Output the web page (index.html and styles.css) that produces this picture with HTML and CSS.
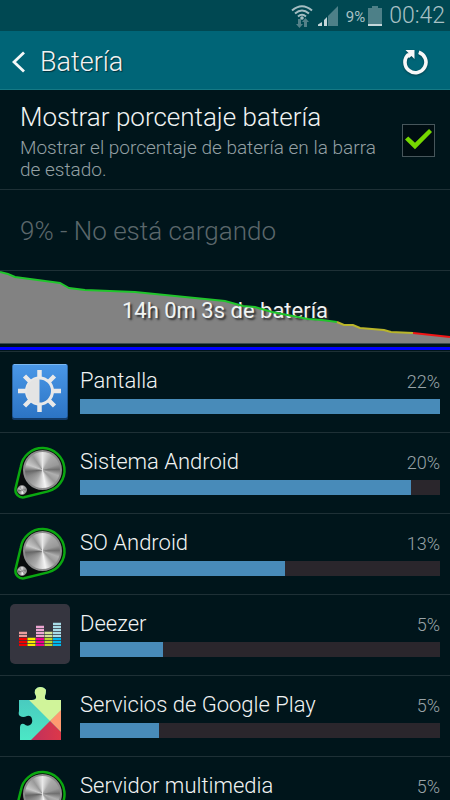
FILE: index.html
```html
<!DOCTYPE html>
<html lang="es">
<head>
<meta charset="utf-8">
<meta name="viewport" content="width=device-width, initial-scale=1">
<title>Batería</title>
<link rel="stylesheet" href="styles.css">
</head>
<body>
<div class="screen">
  <div class="status">
    <svg class="status-wifi" width="22" height="24" viewBox="0 0 22 24" aria-hidden="true">
      <g fill="none" stroke="#a5bec3" stroke-width="2">
        <path d="M1 6.500Q11-2 21 6.500"/><path d="M4 9.500Q11 3.500 18 9.500"/><path d="M7 12.500Q11 9 15 12.500"/>
      </g>
      <circle cx="11" cy="14" r="1.800" fill="#a5bec3"/>
      <path d="M7 15h3v5h2l-3.500 4L5 20h2zM13 23h3v-5h2l-3.500-4L11 18h2z" fill="#548088"/>
    </svg>
    <svg class="status-signal" width="20" height="20" viewBox="0 0 20 20" aria-hidden="true">
      <path d="M10 10L20 0V20H10z" fill="#4d8088"/>
      <path d="M0 20V18.500L4 16V20zM6 20V14L9 11V20z" fill="#c5d7da"/>
    </svg>
    <span class="status-percent">9%</span>
    <svg class="status-battery" width="14" height="20" viewBox="0 0 14 20" aria-hidden="true">
      <path d="M0 2H4V0H10V2H14V20H0z" fill="#4d8088"/><path d="M0 18H14V20H0z" fill="#c5d7da"/>
    </svg>
    <span class="clock">00:42</span>
  </div>

  <header class="bar">
    <button class="back" aria-label="Atrás">
      <svg width="14" height="22" viewBox="0 0 14 22"><path d="M12 1.500L2 11L12 20.500" fill="none" stroke="#f4f8f8" stroke-width="2.800"/></svg>
    </button>
    <h1 class="bar-title">Batería</h1>
    <button class="refresh" aria-label="Actualizar">
      <svg width="26" height="26" viewBox="0 0 26 26"><path d="M15.800 3.200A10.500 10.500 0 1 1 5.500 5.300" fill="none" stroke="#f8f8f8" stroke-width="3.600"/><path d="M2.500 1H11.500V10L8.500 7L6 9L3.500 6L5.500 4z" fill="#f8f8f8"/></svg>
    </button>
  </header>

  <main>
    <label class="setting">
      <span class="setting-text">
        <span class="setting-title">Mostrar porcentaje batería</span>
        <span class="setting-note">Mostrar el porcentaje de batería en la barra de estado.</span>
      </span>
      <input class="check" type="checkbox" checked>
    </label>
    <p class="state">9% - No está cargando</p>

    <section class="chart">
      <svg class="chart-layer" viewBox="0 0 450 72" preserveAspectRatio="none" aria-hidden="true">
        <path fill="#828282" d="M0 1L8 3L15 6L30 8L60 12L69 17L85 19L135 21L175 25L225 30L243 35L255 36L272 41L308 48L322 49L337 51L344 54L353 54L360 57L384 59L391 61L413 62L450 66V72H0z"/>
      </svg>
      <p class="chart-text">14h 0m 3s de batería</p>
      <svg class="chart-layer" viewBox="0 0 450 72" preserveAspectRatio="none" aria-hidden="true">
        <g fill="none" stroke-width="2">
          <path stroke="#20c52c" d="M0 1L8 3L15 6L30 8L60 12L69 17L85 19L135 21L175 25L225 30L243 35L255 36L272 41L308 48L322 49L337 51"/>
          <path stroke="#b9b52a" d="M337 51L344 54L353 54L360 57L384 59L391 61L413 62"/>
          <path stroke="#f01414" d="M413 62L450 66"/>
        </g>
      </svg>
    </section>
    <div class="timeline"></div>

    <ul class="apps">
      <li class="app">
        <span class="app-icon">
          <svg width="60" height="60" viewBox="0 0 60 60" aria-hidden="true">
            <defs><linearGradient id="blue" x2="0" y2="1"><stop stop-color="#4a98e8"/><stop offset="1" stop-color="#2c74c4"/></linearGradient></defs>
            <rect x="2" y="3" width="56" height="56" rx="2" fill="#123a66"/>
            <rect x="2.500" y="3" width="55" height="54" rx="2" fill="url(#blue)"/>
            <path d="M4 3.500H56" stroke="#7ab8f2"/>
            <g stroke="#e9e9e9" stroke-width="4.500" fill="none">
              <path d="M29.500 9V17M29.500 43V51M8 30H16M43 30H51M14.500 15L20 20.500M44.500 15L39 20.500M14.500 45L20 39.500M44.500 45L39 39.500"/>
              <circle cx="29.500" cy="30" r="13" stroke-width="3"/>
            </g>
            <path d="M29.500 17A13 13 0 0 0 29.500 43z" fill="#e4e4e4"/>
          </svg>
        </span>
        <span class="app-name">Pantalla</span><span class="app-share">22%</span>
        <span class="track"><span class="fill" style="width:100%"></span></span>
      </li>
      <li class="app">
        <span class="app-icon">
          <svg width="60" height="60" viewBox="0 0 60 60" aria-hidden="true"><path d="M10.800 24.500A22 22 0 1 1 38 49.400L14 55.300A7.500 7.500 0 0 1 5.500 46.500z" fill="#080b0c" stroke="#0aa810" stroke-width="2.500"/></svg>
          <span class="dial"></span><span class="dial dial-small"></span>
        </span>
        <span class="app-name">Sistema Android</span><span class="app-share">20%</span>
        <span class="track"><span class="fill" style="width:92%"></span></span>
      </li>
      <li class="app">
        <span class="app-icon">
          <svg width="60" height="60" viewBox="0 0 60 60" aria-hidden="true"><path d="M10.800 24.500A22 22 0 1 1 38 49.400L14 55.300A7.500 7.500 0 0 1 5.500 46.500z" fill="#080b0c" stroke="#0aa810" stroke-width="2.500"/></svg>
          <span class="dial"></span><span class="dial dial-small"></span>
        </span>
        <span class="app-name">SO Android</span><span class="app-share">13%</span>
        <span class="track"><span class="fill" style="width:57%"></span></span>
      </li>
      <li class="app">
        <span class="app-icon">
          <svg width="60" height="60" viewBox="0 0 60 60" aria-hidden="true">
            <rect width="60" height="60" rx="5" fill="#35353f"/>
            <g stroke-width="8" stroke-dasharray="2.200 .8">
              <path stroke="#f00000" d="M13 42V33"/><path stroke="#e89c9c" d="M13 33V27"/>
              <path stroke="#f8e800" d="M21.500 42V33"/>
              <path stroke="#f0008c" d="M30 42V33"/><path stroke="#eca6d2" d="M30 33V21"/>
              <path stroke="#bed52c" d="M38.500 42V33"/><path stroke="#d2e294" d="M38.500 33V27"/>
              <path stroke="#00b8ee" d="M47 42V33"/><path stroke="#a8dce8" d="M47 33V18"/>
            </g>
          </svg>
        </span>
        <span class="app-name">Deezer</span><span class="app-share">5%</span>
        <span class="track"><span class="fill" style="width:23%"></span></span>
      </li>
      <li class="app">
        <span class="app-icon">
          <svg width="60" height="60" viewBox="0 0 60 60" aria-hidden="true">
            <defs>
              <clipPath id="piece"><path d="M9 15H22Q27 15 26 11Q24 8 25 5Q27 2 30 2Q34 2 36 5Q36 8 35 11Q34 15 38 15H51V55H10V43Q10 38 14 39Q17 42 20 40Q23 38 22 34Q21 30 17 31Q13 33 10 31Q8 30 9 26z"/></clipPath>
              <linearGradient id="teal" x2="0" y2="1"><stop stop-color="#48c0bd"/><stop offset="1" stop-color="#4cebc6"/></linearGradient>
              <linearGradient id="red"><stop stop-color="#b92f62"/><stop offset="1" stop-color="#e63a42"/></linearGradient>
            </defs>
            <g clip-path="url(#piece)">
              <path d="M0 0H60V60H0z" fill="url(#teal)"/>
              <path d="M8 1H60V17L40 36L20 16z" fill="#d0f49a"/>
              <path d="M40 36L56 20V52z" fill="#ff9a70"/>
              <path d="M40 36L16 60H60V56z" fill="url(#red)"/>
            </g>
          </svg>
        </span>
        <span class="app-name">Servicios de Google Play</span><span class="app-share">5%</span>
        <span class="track"><span class="fill" style="width:22%"></span></span>
      </li>
      <li class="app">
        <span class="app-icon">
          <svg width="60" height="60" viewBox="0 0 60 60" aria-hidden="true"><path d="M10.800 24.500A22 22 0 1 1 38 49.400L14 55.300A7.500 7.500 0 0 1 5.500 46.500z" fill="#080b0c" stroke="#0aa810" stroke-width="2.500"/></svg>
          <span class="dial"></span><span class="dial dial-small"></span>
        </span>
        <span class="app-name">Servidor multimedia</span><span class="app-share">5%</span>
        <span class="track"><span class="fill" style="width:21%"></span></span>
      </li>
    </ul>
  </main>
</div>
</body>
</html>
```
FILE: styles.css
```css
* { box-sizing: border-box; }
body {
  margin: 0;
  background: #00151b;
  color: #f0f3f3;
  font-family: Roboto, "Liberation Sans", sans-serif;
  font-weight: 300;
}
h1, p, ul { margin: 0; padding: 0; font-weight: 300; }
button { padding: 0; border: 0; background: none; display: flex; }
svg { display: block; }
.screen { height: 100vh; overflow: hidden; }

.status {
  display: flex;
  justify-content: flex-end;
  align-items: center;
  height: 31px;
  padding: 0 5px;
  background: #004852;
  color: #a9c1c5;
}
.status-signal { margin-left: 5px; }
.status-percent { margin: 2px 3px 0 8px; font-size: 15px; font-weight: 400; }
.clock { margin-left: 7px; font-size: 23px; line-height: 32px; }

.bar {
  display: flex;
  align-items: center;
  height: 59px;
  padding: 4px 21px 0 12px;
  background: #006577;
  border-bottom: 1px solid #157985;
}
.bar-title {
  flex: 1;
  margin-left: 14px;
  font-size: 27px;
  line-height: 32px;
  text-shadow: 1px 1px 1px #00303a;
}
.refresh { filter: drop-shadow(0 1px 1px #00404c); }

.setting {
  display: flex;
  align-items: center;
  min-height: 100px;
  padding: 9px 15px 8px 20px;
  border-bottom: 1px solid #1e3036;
}
.setting-text { flex: 1; padding-right: 24px; }
.setting-title { display: block; margin-bottom: 2px; font-size: 26px; line-height: 36px; }
.setting-note { display: block; color: #94a0a4; font-size: 19px; line-height: 22px; }
.check {
  appearance: none;
  flex: none;
  display: grid;
  place-items: center;
  width: 33px;
  height: 33px;
  margin: 0;
  background: #000d12;
  border: 1px solid #47565b;
}
.check:checked::before {
  content: "";
  width: 27px;
  height: 22px;
  background: #75d800;
  clip-path: polygon(0 48%, 12% 34%, 37% 62%, 89% 0, 100% 14%, 37% 92%);
}

.state {
  height: 81px;
  padding: 2px 20px 0;
  border-bottom: 1px solid #1e3036;
  color: #5b676b;
  font-size: 26px;
  line-height: 78px;
}

.chart { display: grid; height: 73px; border-bottom: 1px solid #3b4c50; }
.chart-layer { grid-area: 1 / 1; width: 100%; height: 72px; }
.chart-text {
  grid-area: 1 / 1;
  padding-top: 7px;
  align-self: center;
  text-align: center;
  font-size: 22px;
  font-weight: 400;
  line-height: 28px;
  text-shadow: 2px 2px 2px #303030;
}
.timeline { height: 8px; padding: 3px 0 1px; background: #0000ff content-box; border-bottom: 1px solid #1e3036; }

.apps { list-style: none; }
.app {
  display: grid;
  grid-template-columns: 60px 1fr auto;
  grid-template-rows: 31px 15px;
  column-gap: 10px;
  row-gap: 1px;
  height: 81px;
  padding: 15px 10px 0;
  border-bottom: 1px solid #1e3036;
}
.app-icon { position: relative; grid-row: 1 / 3; width: 60px; height: 60px; margin-top: -6px; }
.app-name { font-size: 22px; line-height: 28px; }
.app-share { color: #99a3a7; font-size: 18px; line-height: 30px; }
.track { grid-column: 2 / 4; background: #2a262c; }
.fill { display: block; height: 100%; background: #488bb9; }

.dial {
  position: absolute;
  left: 13px;
  top: 8px;
  width: 39px;
  height: 40px;
  border-radius: 50%;
  border: 2px solid #8c8c8c;
  background: conic-gradient(#e8e8e8, #aaa 35deg, #999 70deg, #707070 88deg, #b0b0b0 110deg, #999 135deg, #f4f4f4 170deg, #aaa 210deg, #888 245deg, #666 265deg, #c8c8c8 290deg, #999 325deg, #e8e8e8);
}
.dial-small { left: 7px; top: 43px; width: 10px; height: 10px; border-width: 1px; }
```
